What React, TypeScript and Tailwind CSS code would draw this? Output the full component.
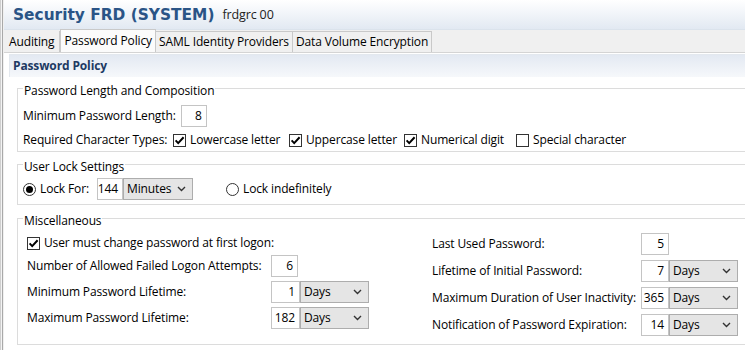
import React from "react";

const Check = ({ checked }: { checked: boolean }) => (
  <span className="w-[13px] h-[13px] border border-[#333333] bg-white flex items-center justify-center shrink-0">
    {checked && (
      <svg width="11" height="11" viewBox="0 0 11 11">
        <path d="M1.6 5.4 L4.2 8.1 L9.6 2.2" stroke="#000" strokeWidth="2" fill="none" />
      </svg>
    )}
  </span>
);

const Radio = ({ on }: { on: boolean }) => (
  <span className="w-[13px] h-[13px] rounded-full border border-[#333333] bg-white flex items-center justify-center shrink-0">
    {on && <span className="w-[7px] h-[7px] rounded-full bg-black" />}
  </span>
);

const NumBox = ({ v, w = "w-[27px]" }: { v: string; w?: string }) => (
  <div className={`${w} h-[22px] border border-[#c4c4c4] bg-white flex items-center justify-end pr-[4px] shrink-0`}>
    {v}
  </div>
);

const Chevron = () => (
  <svg width="9" height="6" viewBox="0 0 9 6">
    <path d="M1 1 L4.5 4.5 L8 1" stroke="#333" strokeWidth="1.4" fill="none" />
  </svg>
);

const Select = ({ v, w = "w-[69px]" }: { v: string; w?: string }) => (
  <div className={`${w} h-[22px] border border-[#adadad] bg-[#e5e5e5] flex items-center justify-between pl-[3px] pr-[6px] shrink-0`}>
    <span>{v}</span>
    <Chevron />
  </div>
);

const Tab = ({ label, active }: { label: string; active?: boolean }) => (
  <div
    className={
      active
        ? "h-[23px] px-[3px] border border-b-0 border-[#c9c9c9] bg-[#fbfbfb] flex items-center"
        : "h-[21px] px-[3px] border border-b-0 border-l-0 border-[#c9c9c9] bg-[#f0f0f0] flex items-center"
    }
  >
    {label}
  </div>
);

export default function App() {
  return (
    <div className="w-[745px] h-[350px] overflow-hidden bg-white flex text-black font-['Open_Sans',sans-serif] text-[12px] leading-[16px] tracking-[-0.13px]">
      <div className="w-[4px] flex shrink-0">
        <div className="w-[1px] bg-[#cfcfcf]" />
        <div className="w-[1px] bg-[#f4f4f4]" />
        <div className="w-[1px] bg-[#a9a9a9]" />
        <div className="w-[1px] bg-[#f0f0f0]" />
      </div>
      <div className="flex-1 flex flex-col min-w-0">
        <header className="h-[30px] shrink-0 bg-linear-to-b from-white to-[#e2e9f2] flex items-center pl-[9px] gap-[8px] border-b border-[#dbe3ec]">
          <span className="font-['DejaVu_Sans',sans-serif] font-bold text-[15.4px] text-[#2a5486] leading-[20px] tracking-normal">
            Security FRD (SYSTEM)
          </span>
          <span className="text-[12.5px] text-[#222]">frdgrc 00</span>
        </header>
        <div className="h-[23px] shrink-0 bg-[#f0f0f0] border-b border-[#d4d4d4] flex items-end">
          <div className="h-[21px] px-[5px] border-r border-[#c9c9c9] flex items-center">Auditing</div>
          <Tab label="Password Policy" active />
          <Tab label="SAML Identity Providers" />
          <Tab label="Data Volume Encryption" />
        </div>
        <div className="flex-1 flex flex-col pl-[5px] min-h-0">
          <div className="h-[23px] shrink-0 mt-[1px] bg-linear-to-b from-[#e3e9f2] to-[#f6f8fb] border-l border-t border-[#e3e8ee] flex items-center pl-[3px] font-bold text-[#1d3a63]">
            Password Policy
          </div>
          <div className="pl-[8px] flex flex-col">
            {/* Group 1 */}
            <fieldset className="w-[740px] border border-[#dcdcdc] pl-[5px] pb-[3px]">
              <legend className="px-[1px] pt-[6px] leading-[16px]">Password Length and Composition</legend>
              <div className="flex items-center h-[23px] mt-[5px] gap-[5px]">
                <span>Minimum Password Length:</span>
                <NumBox v="8" w="w-[26px]" />
              </div>
              <div className="flex items-center h-[16px] mt-[5px]">
                <span className="w-[150px]">Required Character Types:</span>
                <div className="w-[116px] flex items-center gap-[4px]">
                  <Check checked />
                  <span>Lowercase letter</span>
                </div>
                <div className="w-[115px] flex items-center gap-[4px]">
                  <Check checked />
                  <span>Uppercase letter</span>
                </div>
                <div className="w-[112px] flex items-center gap-[4px]">
                  <Check checked />
                  <span>Numerical digit</span>
                </div>
                <div className="flex items-center gap-[4px]">
                  <Check checked={false} />
                  <span>Special character</span>
                </div>
              </div>
            </fieldset>
            {/* Group 2 */}
            <fieldset className="w-[740px] mt-[1px] border border-[#dcdcdc] pl-[5px] pb-[4px]">
              <legend className="px-[1px] pt-[6px] leading-[16px]">User Lock Settings</legend>
              <div className="flex items-center h-[22px] mt-[3px]">
                <Radio on />
                <span className="ml-[4px] w-[57px]">Lock For:</span>
                <NumBox v="144" w="w-[26px]" />
                <Select v="Minutes" w="w-[70px]" />
                <span className="ml-[33px]">
                  <Radio on={false} />
                </span>
                <span className="ml-[4px]">Lock indefinitely</span>
              </div>
            </fieldset>
            {/* Group 3 */}
            <fieldset className="w-[740px] mt-[2px] border border-[#dcdcdc] pl-[9px] pb-[8px]">
              <legend className="px-[1px] pt-[6px] leading-[16px] -ml-[4px]">Miscellaneous</legend>
              <div className="flex items-start">
                <div className="w-[405px] flex flex-col gap-[4px] mt-[6px]">
                  <div className="flex items-center h-[16px] gap-[4px]">
                    <Check checked />
                    <span>User must change password at first logon:</span>
                  </div>
                  <div className="grid grid-cols-[244px_auto] items-center h-[22px]">
                    <span>Number of Allowed Failed Logon Attempts:</span>
                    <NumBox v="6" />
                  </div>
                  <div className="grid grid-cols-[244px_auto] items-center h-[22px]">
                    <span>Minimum Password Lifetime:</span>
                    <div className="flex">
                      <NumBox v="1" w="w-[29px]" />
                      <Select v="Days" />
                    </div>
                  </div>
                  <div className="grid grid-cols-[244px_auto] items-center h-[22px]">
                    <span>Maximum Password Lifetime:</span>
                    <div className="flex">
                      <NumBox v="182" w="w-[29px]" />
                      <Select v="Days" />
                    </div>
                  </div>
                </div>
                <div className="flex flex-col gap-[5px] mt-[4px]">
                  <div className="grid grid-cols-[209px_auto] items-center h-[22px]">
                    <span>Last Used Password:</span>
                    <NumBox v="5" w="w-[28px]" />
                  </div>
                  <div className="grid grid-cols-[209px_auto] items-center h-[22px]">
                    <span>Lifetime of Initial Password:</span>
                    <div className="flex">
                      <NumBox v="7" w="w-[28px]" />
                      <Select v="Days" />
                    </div>
                  </div>
                  <div className="grid grid-cols-[209px_auto] items-center h-[22px]">
                    <span>Maximum Duration of User Inactivity:</span>
                    <div className="flex">
                      <NumBox v="365" w="w-[28px]" />
                      <Select v="Days" />
                    </div>
                  </div>
                  <div className="grid grid-cols-[209px_auto] items-center h-[22px]">
                    <span>Notification of Password Expiration:</span>
                    <div className="flex">
                      <NumBox v="14" w="w-[28px]" />
                      <Select v="Days" />
                    </div>
                  </div>
                </div>
              </div>
            </fieldset>
          </div>
        </div>
      </div>
    </div>
  );
}
